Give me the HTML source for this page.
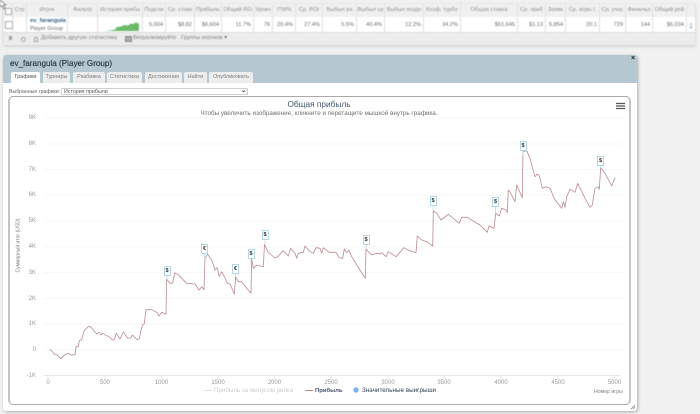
<!DOCTYPE html>
<html><head><meta charset="utf-8"><style>
html,body{margin:0;padding:0}
body{width:700px;height:414px;background:#f1f1f1;position:relative;overflow:hidden;font-family:"Liberation Sans",sans-serif}
.a{position:absolute;white-space:nowrap}
#top{filter:blur(.4px)}
.h,.c{position:absolute;text-align:center;font-size:5.6px;overflow:hidden;white-space:nowrap}
.h{top:4px;height:13px;line-height:13px;color:#8f8f8f;background:#f0f0f0;border-right:1px solid #e2e2e2;box-sizing:border-box}
.c{top:17px;height:15px;line-height:16px;color:#6a6a6a;background:#fff;border-right:1px solid #e0e0e0;box-sizing:border-box;text-align:right;padding-right:2px}
.tab{position:absolute;top:72px;height:11px;line-height:11px;background:#ededed;text-align:center;font-size:5.5px;color:#7d7d7d;border-radius:2px 2px 0 0;box-sizing:border-box}
.yl{position:absolute;left:16px;width:20px;text-align:right;font-size:6px;color:#999;line-height:8px}
.xl{position:absolute;top:379px;width:30px;text-align:center;font-size:6px;color:#999;line-height:8px}
.f{position:absolute;width:7px;height:10px;background:#fff;border:1px solid #b5d6e4;box-sizing:border-box;font:bold 5.5px/8px "Liberation Sans",sans-serif;color:#333;text-align:center}
</style></head><body>
<div id="top">
<div class="a" style="left:4px;top:4px;width:691px;height:41px;background:#ececec;box-shadow:0 1px 3px #c4c4c4"></div>
<div class="h" style="left:4px;width:9px"></div><div class="h" style="left:13px;width:14px">Стр</div><div class="h" style="left:27px;width:41px">Игрок</div><div class="h" style="left:68px;width:30px">Фильтр</div><div class="h" style="left:98px;width:45px">История прибы</div><div class="h" style="left:143px;width:23px">Подсчи</div><div class="h" style="left:166px;width:29px">Ср. ставк</div><div class="h" style="left:195px;width:27px">Прибыль</div><div class="h" style="left:222px;width:32px">Общий RO</div><div class="h" style="left:254px;width:19px">Уровн</div><div class="h" style="left:273px;width:23px">ITM%</div><div class="h" style="left:296px;width:27px">Ср. ROI</div><div class="h" style="left:323px;width:34px">Выбыл ра</div><div class="h" style="left:357px;width:28px">Выбыл ср</div><div class="h" style="left:385px;width:39px">Выбыл поздн</div><div class="h" style="left:424px;width:37px">Коэф. турбо</div><div class="h" style="left:461px;width:57px">Общая ставка</div><div class="h" style="left:518px;width:28px">Ср. приб</div><div class="h" style="left:546px;width:20px">Заявк</div><div class="h" style="left:566px;width:34px">Ср. игры /.</div><div class="h" style="left:600px;width:26px">Ср. учас</div><div class="h" style="left:626px;width:27px">Финальн</div><div class="h" style="left:653px;width:34px">Общий рей</div><div class="h" style="left:687px;width:8px;border:0"></div>
<div class="c" style="left:4px;width:9px"></div><div class="c" style="left:13px;width:14px"></div>
<div class="c" style="left:27px;width:41px;text-align:left;padding-left:3px;padding-right:0;line-height:8px"><b style="color:#2f5f86;font-size:5.8px">ev_farangula</b><br><span style="font-size:5.6px">Player Group</span></div>
<div class="c" style="left:68px;width:30px"></div><div class="c" style="left:98px;width:45px"></div>
<div class="c" style="left:143px;width:23px">5,004</div><div class="c" style="left:166px;width:29px">$8.82</div><div class="c" style="left:195px;width:27px">$6,604</div><div class="c" style="left:222px;width:32px">11.7%</div><div class="c" style="left:254px;width:19px">76</div><div class="c" style="left:273px;width:23px">20.4%</div><div class="c" style="left:296px;width:27px">27.4%</div><div class="c" style="left:323px;width:34px">5.5%</div><div class="c" style="left:357px;width:28px">40.4%</div><div class="c" style="left:385px;width:39px">12.2%</div><div class="c" style="left:424px;width:37px">34.2%</div><div class="c" style="left:461px;width:57px">$51,645</div><div class="c" style="left:518px;width:28px">$1.13</div><div class="c" style="left:546px;width:20px">5,854</div><div class="c" style="left:566px;width:34px">20.1</div><div class="c" style="left:600px;width:26px">729</div><div class="c" style="left:626px;width:27px">144</div><div class="c" style="left:653px;width:34px">$5,034</div><div class="c" style="left:687px;width:8px;border:0;color:#7a9ab5;text-align:center;padding:0;text-decoration:underline">x</div>
<div class="a" style="left:4px;top:32px;width:691px;height:1px;background:#dcdcdc"></div>
<div class="a" style="left:5px;top:8px;width:5px;height:5px;background:#fff;border:1px solid #aaa;border-radius:1px"></div>
<div class="a" style="left:4.500px;top:21px;width:6px;height:6px;background:#fff;border:1px solid #aaa;border-radius:1px"></div>
<svg class="a" style="left:100px;top:18px" width="42" height="14"><path d="M3 13L10 12.500 15 11.500 17 9 21 8.500 24 7 28 7.500 31 5.500 34 6 35 4.500 39 5.500 39 13Z" fill="#6dbb6a"/></svg>
<svg class="a" style="left:0;top:0" width="8" height="11"><path d="M0 0L0 7 2 5.500 3.500 9 5 8.500 3.500 5 6 5Z" fill="#fff" stroke="#555" stroke-width=".6"/></svg>
<div class="a" style="left:8.500px;top:36px;width:3px;height:4px;background:#a0a0a0"></div>
<div class="a" style="left:20.500px;top:36.500px;width:3px;height:3px;border:1px solid #a5a5a5;border-radius:50%"></div>
<div class="a" style="left:34px;top:36.500px;width:2px;height:3px;border:1px solid #a5a5a5"></div>
<div class="a" style="left:41px;top:34px;font-size:5.800px;line-height:9px;color:#808080">Добавить другую статистику</div>
<div class="a" style="left:125px;top:36px;width:5px;height:4px;background:#aaa;border:.5px solid #8a8a8a"></div>
<div class="a" style="left:133px;top:34px;font-size:5.800px;line-height:9px;color:#808080">Визуализируйте</div>
<div class="a" style="left:181px;top:34px;font-size:5.800px;line-height:9px;color:#808080">Группы игроков ▾</div>
</div>
<div class="a" style="left:3px;top:55px;width:634px;height:356px;background:#fff;border-radius:3px;box-shadow:1px 1px 3px #aaa"></div>
<div class="a" style="left:3px;top:55px;width:634px;height:28px;background:#b5c8cf;border-radius:3px 3px 0 0"></div>
<div class="a" style="left:10px;top:58px;font-size:8.100px;line-height:11px;color:#2f3d46;-webkit-text-stroke:.2px #2f3d46;filter:blur(.25px)">ev_farangula (Player Group)</div>
<div class="a" style="left:631px;top:55px;font:bold 7px/7px 'Liberation Sans',sans-serif;color:#222">×</div>
<div style="filter:blur(.35px)">
<div class="tab" style="left:11px;width:29px;background:#fff;color:#555">Графики</div><div class="tab" style="left:43px;width:27px">Турниры</div><div class="tab" style="left:73px;width:32px">Разбивка</div><div class="tab" style="left:107px;width:35px">Статистика</div><div class="tab" style="left:145px;width:37px">Достижения</div><div class="tab" style="left:184px;width:23px">Найти</div><div class="tab" style="left:209px;width:44px">Опубликовать</div>
<div class="a" style="left:9px;top:88px;font-size:5.200px;line-height:8px;color:#666">Выбранные графики:</div>
<div class="a" style="left:61px;top:88px;width:187px;height:7px;background:#fff;border:1px solid #d0d0d0;box-sizing:border-box;font-size:5.300px;line-height:6px;color:#555;padding-left:2px">История прибыли</div>
<div class="a" style="left:241px;top:88px;font:bold 6px/7px 'Liberation Sans',sans-serif;color:#333">⌄</div>
</div>
<div class="a" style="left:8px;top:96px;width:623px;height:309px;border:1px solid #aaa;border-left:2px solid #c4c4c4;border-right:2px solid #c4c4c4;box-sizing:border-box;border-radius:5px;background:#fff"></div>
<svg class="a" style="left:0;top:0;filter:blur(.3px)" width="700" height="414">
<g stroke="#f7f7f7" stroke-width="1"><path d="M44 118H622M44 144H622M44 169.500H622M44 195H622M44 221H622M44 247H622M44 272.500H622M44 298.500H622M44 324H622M44 350H622"/></g>
<path d="M44 375.500H620" stroke="#e8e8e8" stroke-width="1"/>
<path d="M48 376v3M105 376v3M161.500 376v3M218 376v3M274.500 376v3M331 376v3M388 376v3M444 376v3M501 376v3M558 376v3M614.500 376v3" stroke="#e2e2e2" stroke-width=".8"/>
<path d="M49.300 350L51 350 54.300 354 57.300 355 60.700 358.700 65 354.700 68.300 353.300 71 355 75 354.700 76 346.700 78.300 346.300 79.300 340.700 81.700 339.700 84 330.700 88.300 326.700 90.700 326.700 96.700 334 99 332.300 101 335 102.300 333.300 110 337.300 112.300 340 114.300 339.700 116.300 333.300 120 339 123.300 332 127.700 338 130.700 338 132.300 335 137.300 339.700 139.300 338.700 140.700 331.300 142.700 324.700 144.300 324 146 309.700 151.700 309.700 156.700 312.300 159 316 161.700 312.300 166 314.300 166.700 279.300 170 283.300 172.700 283 174.700 273 178.300 274.700 184 280.700 186.700 283.300 195 284 199 290 201.700 286.700 204 289.700 205 258 207.700 254.300 211.700 260 215 270 217.300 267.700 219.300 276.700 221.700 271.700 224.300 276.700 227.300 283.300 230 284 234.300 294 235.700 276.700 238.300 281.700 241.700 281.700 246.700 288.300 251 293.300 251.700 258.300 253.300 268.300 256.700 265 263.300 266.700 264.500 244.500 268.300 252.500 275 258 278.300 256 283.300 250.700 288.300 256 290.700 248.300 295 253.300 296.700 258.300 298.300 253.300 303.300 252.300 305 246 310 251.700 313.300 253.300 316 247.700 320 248.300 321.700 253.300 323.300 247.700 329.300 252.300 336 252.300 339.300 257.700 342.700 258.300 344.300 249 346.700 252.700 349 250 351.700 256.700 360 270 365.300 278.300 366 249.300 371.700 255 376.700 253.300 380 254 381.700 252.700 386 256.700 388.300 251.700 396 256.700 404 247.700 408.300 250 416 252.700 417.300 236 421.700 240 426.700 241.700 432.700 246 433.300 211 436.700 213.300 441 220 448.300 214.300 459.300 223.300 461.700 217.300 467.300 217.300 473.300 221 480 225 487.300 232.300 489 226 494 228.300 495.700 213.300 499.300 216 501.700 208.300 506 210 507.300 212.700 508.300 190 510 191.700 515 201.700 516.700 185 522.300 197.700 523 151.700 526.700 150.700 530 158.300 535 176.700 537.300 174 539.300 175.700 542.300 188.300 546 186.700 550 188.300 555 200 558.300 204 561.700 208.300 563.300 201.700 565 207.300 566.700 196.700 570 189.300 575 192.300 577.700 183.300 585 198.300 590 207.300 592.300 205 595 188.300 598.300 186.700 599.300 189.300 600.700 167.700 605 173.300 611.700 186 614 180 615.300 177.700" fill="none" stroke="#b98a90" stroke-width=".8" stroke-linejoin="round"/>
<g stroke="#b5d6e4" stroke-width=".7"><path d="M167 275V279M204.500 254V258M235.500 274V277M251 259V263M265 240V244M366 245V249M433 206V211M495.500 207V213M523 151V155M600.500 165.500V168"/></g>
<path d="M616 103.500H625M616 106H625M616 108.500H625" stroke="#555" stroke-width="1.200"/>
<path d="M631 409L635 405M633 409L635 407" stroke="#777" stroke-width=".7"/>
<path d="M204 390.500H212" stroke="#e0e0e0" stroke-width="1"/><path d="M305 390.500H313" stroke="#b98a90" stroke-width="1"/>
<circle cx="356" cy="390" r="2.700" fill="#7cb5ec"/>
</svg>
<div style="filter:blur(.3px)">
<div class="f" style="left:163.500px;top:265.500px">$</div><div class="f" style="left:201px;top:244px">€</div><div class="f" style="left:232px;top:264px">€</div><div class="f" style="left:247.500px;top:249px">$</div><div class="f" style="left:261.500px;top:230px">$</div><div class="f" style="left:362.500px;top:235px">$</div><div class="f" style="left:429.500px;top:196px">$</div><div class="f" style="left:492px;top:197px">$</div><div class="f" style="left:519.500px;top:141px">$</div><div class="f" style="left:597px;top:155.500px">$</div>
<div class="a" style="left:119px;top:98px;width:400px;text-align:center;font-size:8.300px;line-height:12px;color:#46556a">Общая прибыль</div>
<div class="a" style="left:119px;top:109.500px;width:400px;text-align:center;font-size:6.300px;line-height:8px;color:#707070">Чтобы увеличить изображение, кликните и перетащите мышкой внутрь графика.</div>
<div class="yl" style="top:114px">9K</div><div class="yl" style="top:140px">8K</div><div class="yl" style="top:165.500px">7K</div><div class="yl" style="top:191px">6K</div><div class="yl" style="top:217px">5K</div><div class="yl" style="top:243px">4K</div><div class="yl" style="top:268.500px">3K</div><div class="yl" style="top:294.500px">2K</div><div class="yl" style="top:320px">1K</div><div class="yl" style="top:346px">0</div><div class="yl" style="top:372px">-1K</div>
<div class="xl" style="left:33px">0</div><div class="xl" style="left:90px">500</div><div class="xl" style="left:146.500px">1000</div><div class="xl" style="left:203px">1500</div><div class="xl" style="left:259.500px">2000</div><div class="xl" style="left:316px">2500</div><div class="xl" style="left:373px">3000</div><div class="xl" style="left:429px">3500</div><div class="xl" style="left:486px">4000</div><div class="xl" style="left:543px">4500</div><div class="xl" style="left:599.500px">5000</div>
<div class="a" style="left:-11px;top:242px;width:60px;text-align:center;font-size:5px;line-height:7px;color:#808080;transform:rotate(-90deg)">Суммарный итог (USD)</div>
<div class="a" style="left:214px;top:386.500px;font-size:6.200px;line-height:8px;color:#ccc">Прибыль за минусом рейка</div>
<div class="a" style="left:315px;top:386.500px;font:bold 5.900px/8px 'Liberation Sans',sans-serif;color:#46556a">Прибыль</div>
<div class="a" style="left:362px;top:386.500px;font-size:6.300px;line-height:8px;color:#333f50">Значительные выигрыши</div>
<div class="a" style="left:594px;top:388px;font-size:5.200px;line-height:8px;color:#808080">Номер игры</div>
</div>
</body></html>
